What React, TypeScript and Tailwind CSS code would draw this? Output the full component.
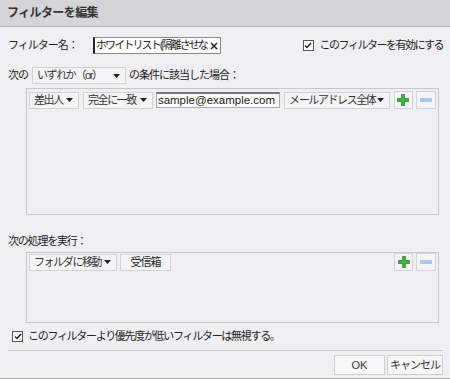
import React from "react";

const jp = {
  fontFamily: '"Liberation Sans", "Noto Sans CJK JP", sans-serif',
};

function Select({ label, width }: { label: string; width: string }) {
  return (
    <div
      className={`${width} h-[17px] flex items-center justify-between shrink-0 border border-[#d2d2d2] bg-[#f5f5f7] pl-[4px] pr-[5px] text-[11px] tracking-[-1.4px] text-[#333] whitespace-nowrap overflow-hidden`}
    >
      <span>{label}</span>
      <svg width="7" height="4" viewBox="0 0 7 4" className="shrink-0 ml-[2px]">
        <path d="M0 0h7L3.5 4z" fill="#222" />
      </svg>
    </div>
  );
}

function PlusMinus() {
  return (
    <div className="flex gap-[3px]">
      <div className="w-[19px] h-[18px] flex items-center justify-center border border-[#d2d2d2] bg-[#f5f5f7]">
        <svg width="12" height="12" viewBox="0 0 12 12">
          <path
            d="M4.5 0.5h3v4h4v3h-4v4h-3v-4h-4v-3h4z"
            fill="#3cb53a"
            stroke="#2c8f2a"
            strokeWidth="0.8"
          />
        </svg>
      </div>
      <div className="w-[20px] h-[18px] flex items-center justify-center border border-[#d2d2d2] bg-[#f5f5f7]">
        <svg width="12" height="4" viewBox="0 0 12 4">
          <rect x="0.5" y="0.5" width="11" height="3" fill="#a9c7ea" stroke="#8fb2dc" strokeWidth="0.6" />
        </svg>
      </div>
    </div>
  );
}

function Check() {
  return (
    <div className="w-[11px] h-[11px] border border-[#555] bg-white flex items-center justify-center shrink-0">
      <svg width="8" height="7" viewBox="0 0 8 7">
        <path d="M1 3.5l2 2L7 1" fill="none" stroke="#222" strokeWidth="1.5" />
      </svg>
    </div>
  );
}

export default function App() {
  return (
    <div
      className="w-[450px] h-[379px] bg-[#f0eff4] flex flex-col text-[#222] overflow-hidden border-b border-[#a8a8a8]"
      style={jp}
    >
      <div className="h-[27px] shrink-0 bg-[#d5d5d7] border-b border-[#b2b2b2] flex items-center pl-[7px] text-[12px] font-bold tracking-[-0.6px] text-[#333]">
        フィルターを編集
      </div>

      <div className="flex flex-col px-[8px]">
        <div className="mt-[10px] h-[17px] flex items-center">
          <span className="w-[85px] text-[11px] tracking-[-1px]">フィルター名：</span>
          <div className="w-[128px] h-[17px] bg-white border border-[#888] border-l-[#222] border-l-[2px] flex items-center justify-between pl-[1px] pr-[3px] text-[11px] tracking-[-1.9px] overflow-hidden whitespace-nowrap">
            <span>ホワイトリスト(隔離させな</span>
            <svg width="8" height="8" viewBox="0 0 8 8" className="shrink-0 ml-[3px]">
              <path d="M1 1l6 6M7 1L1 7" stroke="#222" strokeWidth="1.5" />
            </svg>
          </div>
          <div className="ml-auto flex items-center gap-[6px] mr-[-1px]">
            <Check />
            <span className="text-[11px] tracking-[-1.5px]">このフィルターを有効にする</span>
          </div>
        </div>

        <div className="mt-[13px] h-[17px] flex items-center text-[11px] tracking-[-1px]">
          <span className="w-[24px]">次の</span>
          <Select label="いずれか（or）" width="w-[94px]" />
          <span className="ml-[3px]">の条件に該当した場合：</span>
        </div>

        <div className="mt-[4px] ml-[18px] w-[413px] h-[127px] border border-[#c6c6c8] px-[2px] pt-[2px]">
          <div className="flex items-center">
            <Select label="差出人" width="w-[50px]" />
            <div className="w-[4px]" />
            <Select label="完全に一致" width="w-[70px]" />
            <div className="w-[3px]" />
            <div
              className="w-[126px] h-[16px] bg-white border border-[#aaa] border-t-[#777] border-t-[2px] flex items-center pl-[1px] text-[11.5px]"
              style={{ fontFamily: '"Liberation Sans", sans-serif' }}
            >
              sample@example.com
            </div>
            <div className="w-[4px]" />
            <Select label="メールアドレス全体" width="w-[106px]" />
            <div className="w-[4px]" />
            <PlusMinus />
          </div>
        </div>

        <div className="mt-[20px] h-[12px] flex items-center text-[11px] tracking-[-1.2px]">
          次の処理を実行：
        </div>

        <div className="mt-[5px] ml-[18px] w-[413px] h-[71px] border border-[#c6c6c8] px-[2px] pt-0">
          <div className="flex items-center">
            <Select label="フォルダに移動" width="w-[88px]" />
            <div className="w-[3px]" />
            <div className="w-[51px] h-[17px] flex items-center justify-center border border-[#d2d2d2] bg-[#f5f5f7] text-[11px] tracking-[-1px]">
              受信箱
            </div>
            <div className="ml-auto">
              <PlusMinus />
            </div>
          </div>
        </div>

        <div className="mt-[7px] h-[12px] flex items-center gap-[5px] pl-[4px] text-[11px] tracking-[-1.3px]">
          <Check />
          <span>このフィルターより優先度が低いフィルターは無視する。</span>
        </div>

        <div className="mt-[8px] mr-[-1px] border-t border-[#c8c8ca]" />

        <div className="mt-[4px] flex justify-end gap-[2px] mr-[-1px]">
          <button className="w-[51px] h-[20px] border border-[#cfcfd2] bg-[#f8f8fa] text-[11px] text-[#333]">
            OK
          </button>
          <button className="w-[56px] h-[20px] border border-[#cfcfd2] bg-[#f8f8fa] text-[11px] tracking-[-1px] text-[#333]">
            キャンセル
          </button>
        </div>
      </div>
    </div>
  );
}
